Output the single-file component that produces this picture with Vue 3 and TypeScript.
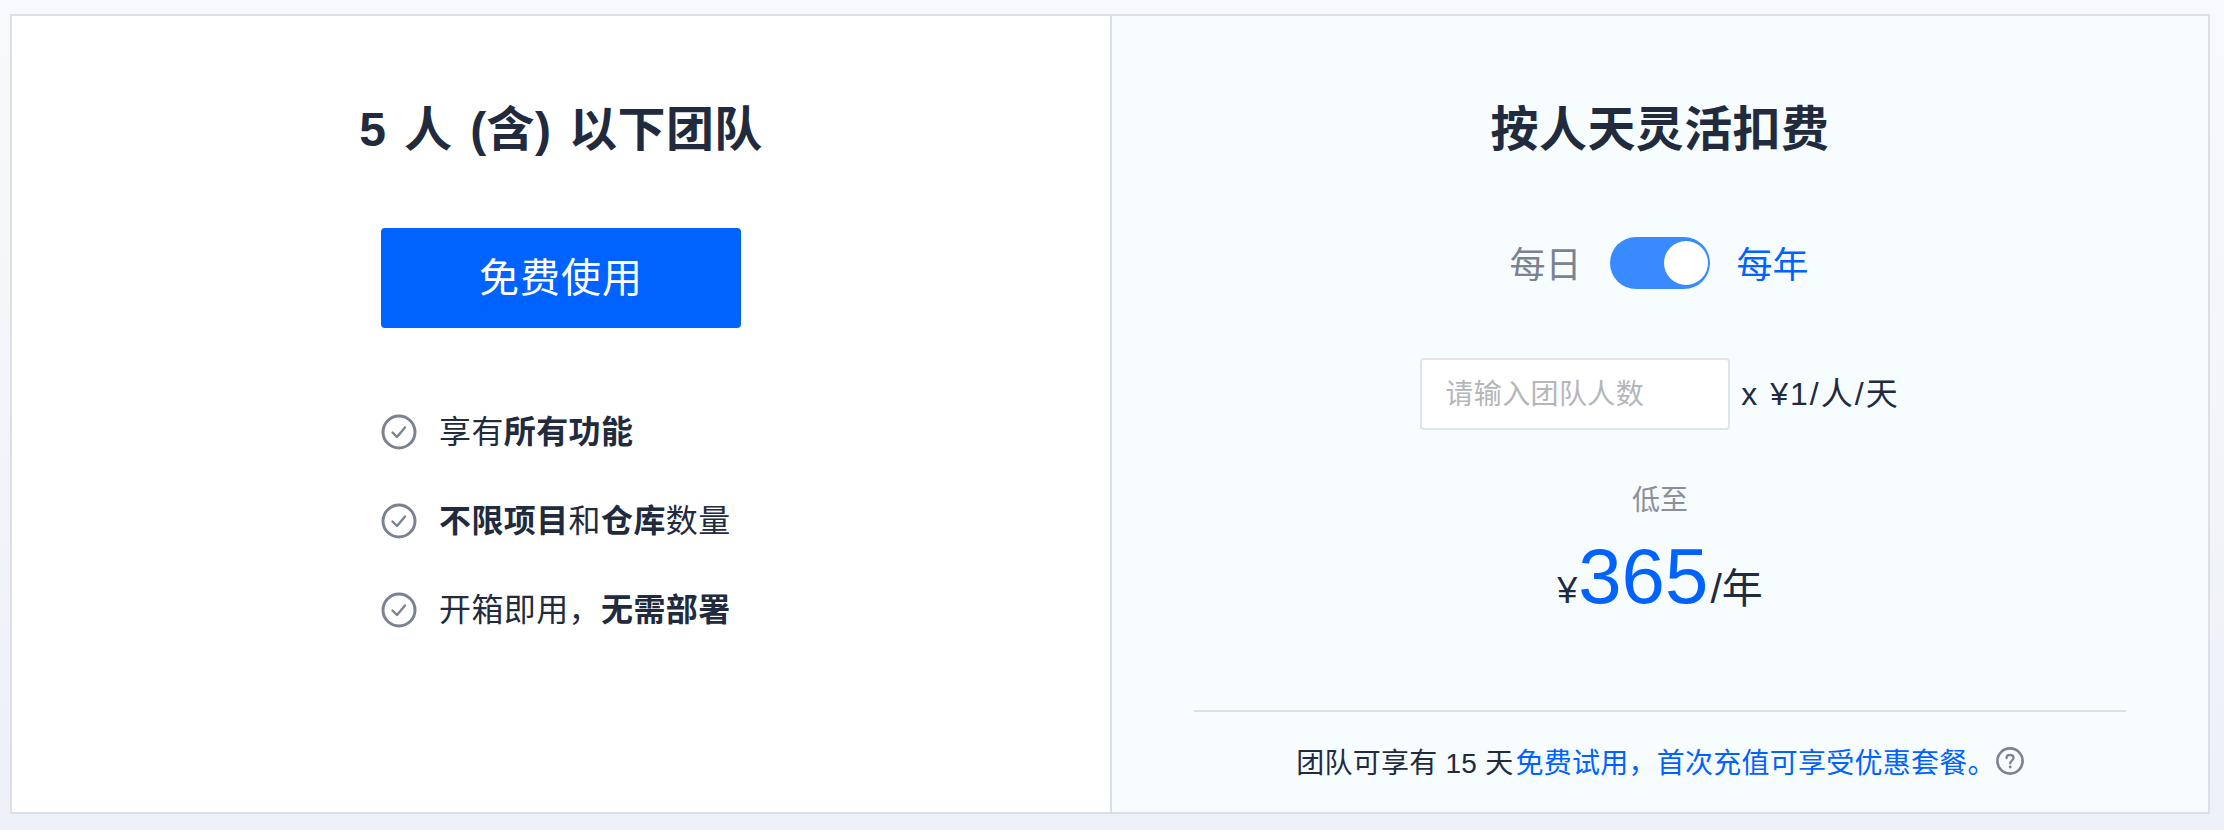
<script setup lang="ts">
interface Seg { t: string; b?: boolean }
const features: Seg[][] = [
  [{ t: '享有' }, { t: '所有功能', b: true }],
  [{ t: '不限项目', b: true }, { t: '和' }, { t: '仓库', b: true }, { t: '数量' }],
  [{ t: '开箱即用，' }, { t: '无需部署', b: true }],
]
</script>

<template>
  <div class="page">
    <div class="card">
      <section class="panel left">
        <h2 class="title title-free">5 人 (含) 以下团队</h2>
        <button class="cta">免费使用</button>
        <ul class="features">
          <li v-for="(row, i) in features" :key="i" class="feature">
            <svg class="check" viewBox="0 0 36 36" fill="none" stroke="#7b8290">
              <circle cx="18" cy="18" r="16" stroke-width="3" />
              <path d="M11.5 18.5 L16 23 L24 13.5" stroke-width="2.4" stroke-linecap="round" stroke-linejoin="round" />
            </svg>
            <span><span v-for="(s, j) in row" :key="j" :class="{ strong: s.b }">{{ s.t }}</span></span>
          </li>
        </ul>
      </section>

      <section class="panel right">
        <h2 class="title">按人天灵活扣费</h2>
        <div class="period">
          <span class="muted label">每日</span>
          <span class="switch"><span class="knob"></span></span>
          <span class="blue label">每年</span>
        </div>
        <div class="seats">
          <input class="seat-input" placeholder="请输入团队人数" />
          <span class="unit">x ¥1/人/天</span>
        </div>
        <div class="from">低至</div>
        <div class="price">
          <span class="yen">¥</span><span class="amount">365</span><span class="per">/年</span>
        </div>
        <div class="note">
          <span class="note-lead">团队可享有 15 天</span><span class="blue">免费试用，首次充值可享受优惠套餐。</span>
          <svg class="help" viewBox="0 0 28 28" fill="none" stroke="#7b8290">
            <circle cx="14" cy="14" r="12.6" stroke-width="2.6" />
            <path d="M10.5 11.2 C10.5 9 12 7.9 14 7.9 C16 7.9 17.6 9.1 17.6 11 C17.6 13.3 14.2 13.6 14.2 16.4" stroke-width="2.2" stroke-linecap="round" />
            <circle cx="14.2" cy="20" r="1.4" fill="#7b8290" stroke="none" />
          </svg>
        </div>
      </section>
    </div>
  </div>
</template>

<style>
html, body { margin: 0; background: #f3f5fa; }
</style>

<style scoped>
.page {
  width: 2224px;
  height: 830px;
  box-sizing: border-box;
  padding: 14px 14px 16px 10px;
  background: linear-gradient(180deg, #f8f9fc 0%, #f3f5fa 50%, #edf0f7 100%);
  font-family: "Liberation Sans", "Noto Sans CJK SC", sans-serif;
  color: #212b3d;
}
.card {
  display: flex;
  height: 800px;
  box-sizing: border-box;
  border: 2px solid #dcdfe8;
  background: #fff;
}
.panel {
  display: flex;
  flex-direction: column;
  align-items: center;
  padding-top: 80px;
  box-sizing: border-box;
}
.left { width: 1098px; }
.right {
  flex: 1;
  background: #f7fcff;
  border-left: 2px solid #dcdfe8;
}
.title {
  margin: 0;
  font-size: 48px;
  line-height: 68px;
  font-weight: 600;
  letter-spacing: 0.4px;
}
.title-free {
  word-spacing: 4px;
}
.cta {
  margin-top: 64px;
  width: 360px;
  height: 100px;
  padding: 0 0 6px;
  border: 0;
  border-radius: 4px;
  background: #0062ff;
  color: #fff;
  font: inherit;
  font-size: 40px;
  letter-spacing: 1px;
}
.features {
  list-style: none;
  width: 360px;
  margin: 86px 0 0;
  padding: 0;
  display: flex;
  flex-direction: column;
  gap: 53px;
}
.feature {
  display: flex;
  align-items: center;
  gap: 22px;
  font-size: 32px;
  line-height: 36px;
  letter-spacing: 0.4px;
  white-space: nowrap;
}
.check { width: 36px; height: 36px; flex: none; }
.strong { font-weight: 600; }
.period {
  margin-top: 73px;
  margin-right: 2px;
  display: flex;
  align-items: center;
  gap: 28px;
  font-size: 36px;
  line-height: 46px;
}
.label { padding-top: 6px; }
.muted { color: #7b8290; }
.blue { color: #0062ff; }
.period .blue { margin-left: -1px; }
.switch {
  width: 100px;
  height: 52px;
  border-radius: 26px;
  background: #3a8aff;
  display: flex;
  align-items: center;
  justify-content: flex-end;
  padding-right: 2px;
  box-sizing: border-box;
}
.knob {
  width: 44px;
  height: 44px;
  border-radius: 50%;
  background: #fff;
}
.seats {
  margin-top: 69px;
  display: flex;
  align-items: center;
  gap: 11px;
}
.seat-input {
  width: 310px;
  height: 72px;
  box-sizing: border-box;
  border: 2px solid #dfe3ea;
  border-radius: 4px;
  background: #fff;
  padding: 2px 23px 0;
  font: inherit;
  font-size: 28px;
  letter-spacing: 0.4px;
  outline: none;
}
.seat-input::placeholder { color: #b4b6ba; opacity: 1; }
.unit { font-size: 32px; line-height: 40px; letter-spacing: 2px; }
.from {
  margin-top: 51px;
  font-size: 28px;
  line-height: 40px;
  color: #8a9099;
}
.price {
  margin-top: 15px;
  line-height: 80px;
  white-space: nowrap;
}
.yen { font-size: 36px; }
.amount { font-size: 78px; color: #0062ff; margin: 0 2px 0 1px; }
.per { font-size: 41px; }
.note {
  margin-top: auto;
  align-self: stretch;
  margin-left: 82px;
  margin-right: 82px;
  height: 102px;
  padding-bottom: 2px;
  box-sizing: border-box;
  border-top: 2px solid #dcdfe8;
  display: flex;
  align-items: center;
  justify-content: center;
  font-size: 28px;
  letter-spacing: 0.25px;
  white-space: nowrap;
}
.note-lead { margin-right: 2px; }
.help { width: 28px; height: 28px; flex: none; }
</style>
